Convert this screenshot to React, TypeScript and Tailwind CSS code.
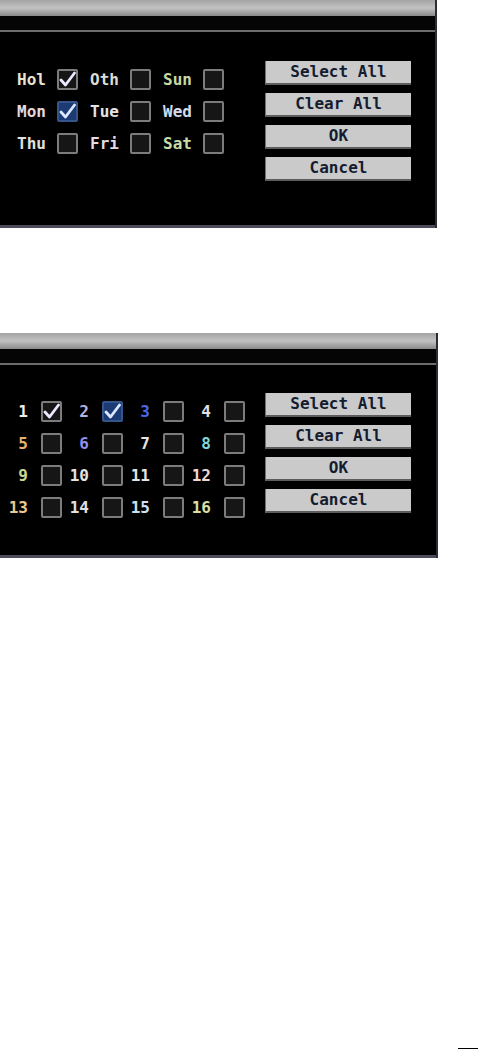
const mono = { fontFamily: '"DejaVu Sans Mono", "Liberation Mono", monospace' }

type Cell = { label: string; color: string; checked?: "white" | "blue" }

const dayCells: Cell[] = [
  { label: "Hol", color: "text-[#e8e4d0]", checked: "white" },
  { label: "Oth", color: "text-[#dcdcd4]" },
  { label: "Sun", color: "text-[#c8d8a0]" },
  { label: "Mon", color: "text-[#e8d8dc]", checked: "blue" },
  { label: "Tue", color: "text-[#e4e4e4]" },
  { label: "Wed", color: "text-[#d4dcec]" },
  { label: "Thu", color: "text-[#e0e0dc]" },
  { label: "Fri", color: "text-[#e4dce4]" },
  { label: "Sat", color: "text-[#c8dca8]" },
]

const chCells: Cell[] = [
  { label: "1", color: "text-[#ececec]", checked: "white" },
  { label: "2", color: "text-[#b8b0e0]", checked: "blue" },
  { label: "3", color: "text-[#4868e8]" },
  { label: "4", color: "text-[#e0e0e0]" },
  { label: "5", color: "text-[#e8b070]" },
  { label: "6", color: "text-[#9090e8]" },
  { label: "7", color: "text-[#e4e4e4]" },
  { label: "8", color: "text-[#80d8d8]" },
  { label: "9", color: "text-[#c8d890]" },
  { label: "10", color: "text-[#e4e4e4]" },
  { label: "11", color: "text-[#e4e4e4]" },
  { label: "12", color: "text-[#f0d8d0]" },
  { label: "13", color: "text-[#e8c890]" },
  { label: "14", color: "text-[#e0e0e0]" },
  { label: "15", color: "text-[#d0e0f0]" },
  { label: "16", color: "text-[#d8e0a0]" },
]

function Box({ checked }: { checked?: "white" | "blue" }) {
  const base =
    checked === "blue"
      ? "border-[#34548c] bg-[#1c3a74]"
      : "border-[#7c7c7c] bg-[#161616]"
  return (
    <div className={`w-[21px] h-[21px] rounded-[2px] border-2 ${base} flex items-center justify-center`}>
      {checked && (
        <svg width="17" height="17" viewBox="0 0 17 17">
          <path
            d="M2 9 L6.5 14 L15.5 2"
            fill="none"
            stroke={checked === "blue" ? "#dce8ff" : "#f0e8ff"}
            strokeWidth="2.8"
            strokeLinecap="round"
            strokeLinejoin="round"
          />
        </svg>
      )}
    </div>
  )
}

function Buttons() {
  return (
    <div className="flex flex-col gap-[8px] w-[146px]" style={mono}>
      {["Select All", "Clear All", "OK", "Cancel"].map((t) => (
        <div
          key={t}
          className="h-[24px] bg-[#cacaca] border-l border-b-2 border-l-[#707070] border-b-[#5c5c5c] flex items-center justify-center text-[16px] font-bold text-[#141c30] leading-none"
        >
          {t}
        </div>
      ))}
    </div>
  )
}

function Panel({ children, h, w }: { children: React.ReactNode; h: string; w: string }) {
  return (
    <div className={`${w} ${h} flex flex-col bg-black border-r-2 border-[#2c2c34]`}>
      <div className="h-[16px] bg-gradient-to-b from-[#a4a4a4] via-[#c2c2c2] to-[#8a8a8a]" />
      <div className="h-[14px] bg-[#050505]" />
      <div className="h-[2px] bg-[#6c6c6c]" />
      <div className="flex-1 bg-black">{children}</div>
      <div className="h-[3px] bg-[#4c4c58]" />
    </div>
  )
}

export default function App() {
  return (
    <div className="w-[478px] h-[1050px] bg-white flex flex-col">
      <Panel w="w-[437px]" h="h-[228px]">
        <div className="flex items-start pt-[29px]">
          <div className="w-[265px] shrink-0 mt-[8px] pl-[17px]" style={mono}>
            <div className="grid grid-cols-[61px_61px_61px] gap-x-[12px] gap-y-[11px]">
              {dayCells.map((c) => (
                <div key={c.label} className="flex items-center">
                  <span className={`w-[40px] text-[16px] font-bold leading-none ${c.color}`}>{c.label}</span>
                  <Box checked={c.checked} />
                </div>
              ))}
            </div>
          </div>
          <Buttons />
        </div>
      </Panel>

      <div className="h-[105px]" />

      <Panel w="w-[438px]" h="h-[225px]">
        <div className="flex items-start pt-[28px]">
          <div className="w-[265px] shrink-0 mt-[8px] pl-[6px]" style={mono}>
            <div className="grid grid-cols-[56px_56px_56px_56px] gap-x-[5px] gap-y-[11px]">
              {chCells.map((c) => (
                <div key={c.label} className="flex items-center">
                  <span className={`w-[22px] mr-[13px] text-right text-[16px] font-bold leading-none ${c.color}`}>
                    {c.label}
                  </span>
                  <Box checked={c.checked} />
                </div>
              ))}
            </div>
          </div>
          <Buttons />
        </div>
      </Panel>

      <div className="mt-auto flex justify-end">
        <div className="w-[20px] h-px bg-black mb-px" />
      </div>
    </div>
  )
}
